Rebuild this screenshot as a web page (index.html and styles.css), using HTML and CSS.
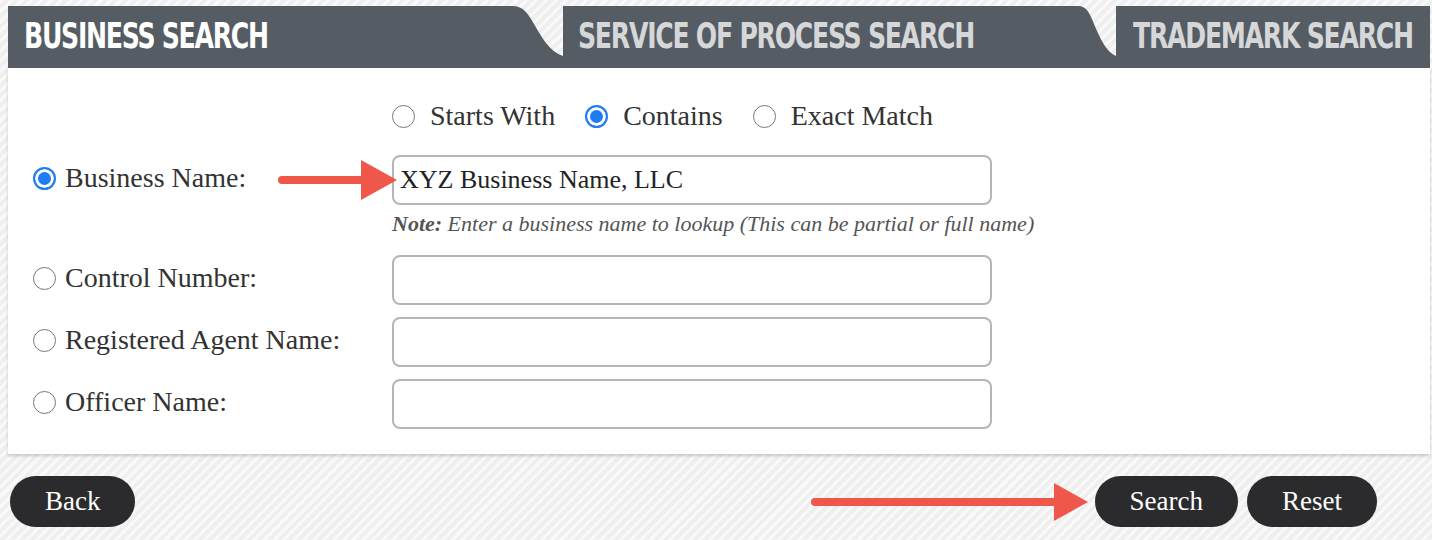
FILE: index.html
```html
<!DOCTYPE html>
<html lang="en">
<head>
<meta charset="utf-8">
<title>Business Search</title>
<link rel="stylesheet" href="styles.css">
</head>
<body>
<div class="page">
  <nav class="tabs">
    <div class="tab tab-business"><span>BUSINESS SEARCH</span></div>
    <svg class="curl curl-wide" viewBox="0 0 51 62" preserveAspectRatio="none"><path d="M0,0 C12,0 16,8 22,18 C30,32 38,46 51,50 L51,62 L0,62 Z"/></svg>
    <div class="tab tab-process"><span>SERVICE OF PROCESS SEARCH</span></div>
    <svg class="curl curl-narrow" viewBox="0 0 38 62" preserveAspectRatio="none"><path d="M0,0 C9,0 12,8 16,18 C22,32 28,46 38,50 L38,62 L0,62 Z"/></svg>
    <div class="tab tab-trademark"><span>TRADEMARK SEARCH</span></div>
  </nav>

  <section class="panel">
    <div class="form-grid">
      <div class="spacer"></div>
      <div class="match-row">
        <label class="opt"><input type="radio" name="match"><span>Starts With</span></label>
        <label class="opt"><input type="radio" name="match" checked><span>Contains</span></label>
        <label class="opt"><input type="radio" name="match"><span>Exact Match</span></label>
      </div>

      <div class="field-label">
        <label class="opt"><input type="radio" name="by" checked><span>Business Name:</span></label>
        <svg class="arrow arrow-name" width="122" height="42" viewBox="0 0 122 42"><line x1="5" y1="21" x2="90" y2="21"/><polygon points="84,1 120,21 84,41"/></svg>
      </div>
      <div class="field"><input class="text" type="text" value="XYZ Business Name, LLC"></div>

      <div class="spacer"></div>
      <p class="note"><b>Note:</b> Enter a business name to lookup (This can be partial or full name)</p>

      <div class="field-label">
        <label class="opt"><input type="radio" name="by"><span>Control Number:</span></label>
      </div>
      <div class="field"><input class="text" type="text"></div>

      <div class="field-label">
        <label class="opt"><input type="radio" name="by"><span>Registered Agent Name:</span></label>
      </div>
      <div class="field"><input class="text" type="text"></div>

      <div class="field-label">
        <label class="opt"><input type="radio" name="by"><span>Officer Name:</span></label>
      </div>
      <div class="field"><input class="text" type="text"></div>
    </div>
  </section>

  <div class="actions">
    <button class="pill" type="button">Back</button>
    <div class="actions-right">
      <svg class="arrow arrow-search" width="282" height="42" viewBox="0 0 282 42"><line x1="7" y1="21" x2="252" y2="21"/><polygon points="246,2 280,21 246,40"/></svg>
      <button class="pill" type="button">Search</button>
      <button class="pill" type="button">Reset</button>
    </div>
  </div>
</div>
</body>
</html>
```

FILE: styles.css
```css
* { box-sizing: border-box; }

html, body {
  margin: 0;
  height: 100%;
}

body {
  background-color: #f1f1f1;
  background-image: repeating-linear-gradient(135deg, #f9f9f9 0px, #f9f9f9 3px, #efefef 3px, #efefef 7px);
  font-family: "Liberation Serif", "Times New Roman", serif;
  color: #333;
}

.page {
  padding: 6px 2px 0 8px;
}

/* Tabs */
.tabs {
  display: flex;
  height: 62px;
}

.tab {
  background: #555c63;
  display: flex;
  align-items: center;
  height: 62px;
  min-width: 0;
  overflow: hidden;
  font-family: "DejaVu Sans Condensed", "Liberation Sans", sans-serif;
  font-weight: 700;
  font-size: 35px;
  letter-spacing: -1.6px;
  color: #d6d7d8;
  white-space: nowrap;
}

.tab span {
  display: inline-block;
  position: relative;
  top: -1px;
  transform: scaleX(0.8);
  transform-origin: left center;
}

.tab-business {
  flex: 0 0 504px;
  padding-left: 16px;
  color: #ffffff;
}

.tab-process {
  flex: 0 0 515px;
  padding-left: 15px;
}

.tab-trademark {
  flex: 1 1 auto;
  padding-left: 17px;
}

.curl {
  display: block;
  height: 62px;
  fill: #555c63;
}
.curl-wide { flex: 0 0 51px; width: 51px; }
.curl-narrow { flex: 0 0 38px; width: 38px; }

/* Panel */
.panel {
  background: #ffffff;
  padding: 33px 0 25px 25px;
  box-shadow: 0 2px 3px rgba(0, 0, 0, 0.18);
}

.form-grid {
  display: grid;
  grid-template-columns: 359px 600px;
  row-gap: 12px;
  align-items: center;
}

.match-row {
  display: flex;
  gap: 30px;
  height: 30px;
  align-items: center;
  margin-bottom: 12px;
}

.opt {
  display: inline-flex;
  align-items: center;
  font-size: 28px;
  line-height: 30px;
  color: #333;
  white-space: nowrap;
}

.match-row .opt span { margin-left: 15px; }
.field-label .opt span { margin-left: 9px; }

input[type="radio"] {
  appearance: none;
  -webkit-appearance: none;
  margin: 0;
  width: 23px;
  height: 23px;
  border-radius: 50%;
  border: 1.5px solid #777;
  background: #fff;
  flex: 0 0 auto;
}

input[type="radio"]:checked {
  border: 2px solid #1f7cf2;
  background: #1f7cf2;
  box-shadow: inset 0 0 0 3px #fff;
}

.field-label {
  display: flex;
  align-items: center;
  justify-content: space-between;
  position: relative;
  top: -2px;
}

.text {
  display: block;
  width: 600px;
  height: 50px;
  border: 2px solid #b5b5b5;
  border-radius: 8px;
  padding: 0 6px;
  font-family: "Liberation Serif", "Times New Roman", serif;
  font-size: 26px;
  color: #222;
  background: #fff;
  outline: none;
}

.note {
  margin: -5px 0 7px;
  font-size: 22px;
  line-height: 24px;
  font-style: italic;
  color: #555;
  white-space: nowrap;
}

.arrow {
  display: block;
  flex: 0 0 auto;
  stroke: #f0574b;
  fill: #f0574b;
  stroke-width: 8;
  stroke-linecap: round;
}
.arrow polygon { stroke: none; }

.arrow-name {
  position: relative;
  z-index: 1;
  margin-right: -7px;
  top: 2px;
}

/* Actions */
.actions {
  display: flex;
  justify-content: space-between;
  align-items: center;
  margin-top: 22px;
  padding: 0 53px 0 2px;
}

.actions-right {
  display: flex;
  align-items: center;
  gap: 9px;
}

.arrow-search { margin-right: -4px; }

.pill {
  height: 51px;
  padding: 0 35px;
  border: none;
  border-radius: 26px;
  background: #2b2b2d;
  color: #fff;
  font-family: "Liberation Serif", "Times New Roman", serif;
  font-size: 27px;
  cursor: pointer;
}
```
